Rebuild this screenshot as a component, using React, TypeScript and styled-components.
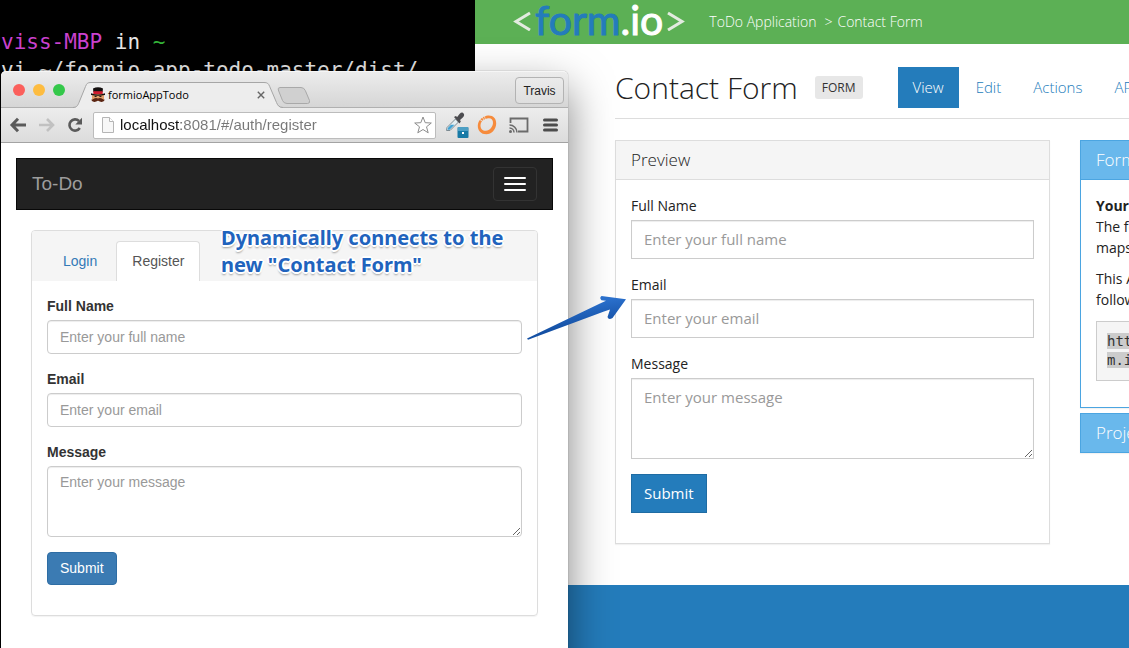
import React from "react";
import styled, { createGlobalStyle, css } from "styled-components";

const sans = `"Open Sans", "Noto Sans", sans-serif`;
const helvetica = `"Liberation Sans", Arial, sans-serif`;
const blue = "#247cbb";

const GlobalStyle = createGlobalStyle`
  *, *::before, *::after { box-sizing: border-box; }
  body { margin: 0; background: #fff; }
  button, input, textarea { font: inherit; margin: 0; }
  button { cursor: pointer; }
  a { text-decoration: none; }
`;

const Desktop = styled.div`
  position: relative;
  min-height: 100vh;
  overflow: hidden;
`;

/* ---------- Terminal ---------- */

const Terminal = styled.pre`
  position: absolute;
  left: 0;
  top: 0;
  bottom: 0;
  width: 475px;
  margin: 0;
  padding: 28px 0 0 1px;
  overflow: hidden;
  background: #000;
  color: #e6e6e6;
  font: 21px/28px "DejaVu Sans Mono", monospace;
`;

const Host = styled.span`
  color: #cb42cf;
`;

const Tilde = styled.span`
  color: #35b53a;
`;

/* ---------- Form.io portal ---------- */

const Portal = styled.div`
  position: absolute;
  left: 475px;
  right: -231px;
  top: 0;
  bottom: 0;
  display: flex;
  flex-direction: column;
  background: #fff;
  color: #222;
  font: 14px/21px ${sans};
`;

const PortalBar = styled.header`
  display: flex;
  align-items: center;
  gap: 24px;
  height: 44px;
  padding: 0 38px;
  background: #5cb055;
`;

const Logo = styled.a`
  display: flex;
  align-items: center;
  gap: 4px;
  height: 44px;
  padding-bottom: 4px;
  color: #fff;
  font: 400 41px/40px Lato, ${sans};
  -webkit-text-stroke: 1px currentColor;
`;

const LogoForm = styled.span`
  color: ${blue};
`;

const Crumbs = styled.nav`
  display: flex;
  gap: 8px;
  padding-bottom: 2px;
  color: #fff;
  font-weight: 350;

  a {
    color: #fff;
  }
`;

const Crumb = styled.span`
  display: flex;
  gap: 5px;
`;

const PortalBody = styled.main`
  padding: 22px 0 41px 140px;
`;

const TitleRow = styled.div`
  display: flex;
  align-items: center;
  height: 53px;
  padding-bottom: 9px;
  border-bottom: 1px solid #ddd;
`;

const Title = styled.h1`
  margin: 0;
  font: 300 30px/40px ${sans};
  white-space: nowrap;
`;

const Badge = styled.span`
  margin: 0 35px 0 17px;
  padding: 0 7px;
  border-radius: 3px;
  background: #e7e7e7;
  color: #333;
  font-size: 12px;
  line-height: 23px;
`;

const Pills = styled.nav`
  display: flex;
  gap: 2px;
`;

const Pill = styled.a<{ $active?: boolean }>`
  padding: 10px 15px;
  font-size: 15px;
  font-weight: 350;
  line-height: 21px;
  color: ${(p) => (p.$active ? "#fff" : blue)};
  background: ${(p) => (p.$active ? blue : "transparent")};
`;

const Columns = styled.div`
  display: grid;
  grid-template-columns: minmax(0, 1fr) 280px;
  gap: 30px;
  align-items: start;
  padding-top: 21px;
`;

const Panel = styled.section<{ $info?: boolean }>`
  border: 1px solid ${(p) => (p.$info ? "#4ba5e1" : "#ddd")};
  background: #fff;
  box-shadow: 0 1px 1px rgba(0, 0, 0, 0.05);
`;

const PanelHeading = styled.h2<{ $info?: boolean; $closed?: boolean }>`
  margin: 0;
  padding: 0 15px;
  border-bottom: ${(p) => (p.$closed ? "0" : "1px")} solid
    ${(p) => (p.$info ? "#4ba5e1" : "#ddd")};
  background: ${(p) => (p.$info ? "#69b8ec" : "#f5f5f5")};
  color: ${(p) => (p.$info ? "#fff" : "#222")};
  font: 300 17px/38px ${sans};
`;

const PanelBody = styled.div`
  padding: 15px;
`;

const Side = styled.aside`
  display: flex;
  flex-direction: column;
  gap: 5px;
`;

const Para = styled.p`
  margin: 0 0 10px;
`;

const CodeBox = styled.pre`
  margin: 11px 0;
  padding: 10px;
  border: 1px solid #ccc;
  background: #f5f5f5;
  color: #333;
  font: 14px/19px "DejaVu Sans Mono", monospace;

  code {
    font: inherit;
    background: #ccc;
  }
`;

const PortalFooter = styled.footer`
  flex: 1;
  background: ${blue};
`;

/* ---------- Forms, in the portal theme and the app theme ---------- */

type Theme = { $app?: boolean };

const Form = styled.form`
  display: flex;
  flex-direction: column;
  gap: 15px;
  align-items: stretch;
`;

const Group = styled.div`
  display: flex;
  flex-direction: column;
  gap: 4px;
`;

const Label = styled.label<Theme>`
  line-height: ${(p) => (p.$app ? "20px" : "21px")};
  font-weight: ${(p) => (p.$app ? 700 : 400)};
`;

const control = css<Theme>`
  display: block;
  width: 100%;
  border: 1px solid #ccc;
  border-radius: ${(p) => (p.$app ? "4px" : "0")};
  padding: ${(p) => (p.$app ? "5px 12px" : "8px 12px")};
  background: #fff;
  color: #555;
  font-size: ${(p) => (p.$app ? "14px" : "15px")};
  line-height: ${(p) => (p.$app ? "20px" : "21px")};
  box-shadow: inset 0 1px 1px rgba(0, 0, 0, 0.075);
  outline: none;

  &::placeholder {
    color: #999;
    opacity: 1;
  }
`;

const TextBox = styled.input<Theme>`
  ${control}
  height: ${(p) => (p.$app ? "34px" : "39px")};
  padding-bottom: ${(p) => (p.$app ? "5px" : "10px")};
`;

const MessageBox = styled.textarea<Theme>`
  ${control}
  height: ${(p) => (p.$app ? "71px" : "81px")};
  resize: vertical;
`;

const Submit = styled.button<Theme>`
  align-self: flex-start;
  height: ${(p) => (p.$app ? "33px" : "39px")};
  margin-bottom: 15px;
  padding: ${(p) => (p.$app ? "0 12px 2px" : "0 12px")};
  border: 1px solid ${(p) => (p.$app ? "#2e6da4" : "#1f6ca3")};
  border-radius: ${(p) => (p.$app ? "4px" : "0")};
  background: ${(p) => (p.$app ? "#3b7bb3" : blue)};
  color: #fff;
  font-size: ${(p) => (p.$app ? "14px" : "15px")};
  font-weight: ${(p) => (p.$app ? 400 : 500)};
`;

/* ---------- Browser window ---------- */

const Browser = styled.div`
  position: absolute;
  left: 1px;
  top: 71px;
  bottom: -30px;
  width: 567px;
  display: flex;
  flex-direction: column;
  border-radius: 5px 5px 0 0;
  background: #fff;
  color: #333;
  font: 14px/20px ${helvetica};
  box-shadow: 0 0 1px rgba(0, 0, 0, 0.6), 0 18px 44px rgba(0, 0, 0, 0.5);
`;

const TitleBar = styled.div`
  display: flex;
  align-items: flex-start;
  height: 37px;
  padding: 0 4px 0 12px;
  border-top: 1px solid #f6f6f6;
  border-radius: 5px 5px 0 0;
  background: linear-gradient(#ececec, #d5d5d5);
  box-shadow: inset 0 -1px 0 #b0b0b0;
`;

const Lights = styled.div`
  display: flex;
  gap: 8px;
  padding-top: 12px;
`;

const Light = styled.button<{ $color: string }>`
  width: 12px;
  height: 12px;
  padding: 0;
  border: 0;
  border-radius: 50%;
  background: ${(p) => p.$color};
`;

const Tab = styled.div`
  position: relative;
  display: flex;
  align-items: center;
  gap: 3px;
  width: 212px;
  height: 26px;
  margin: 10px 0 0 8px;
  padding: 0 19px 0 18px;
  color: #000;
  font: 500 11px/16px ${sans};
`;

const TabShape = styled.svg`
  position: absolute;
  left: 0;
  top: 0;
`;

const TabIcon = styled.svg`
  position: relative;
`;

const TabName = styled.span`
  position: relative;
  flex: 1;
`;

const TabClose = styled.button`
  position: relative;
  display: flex;
  width: 10px;
  padding: 1px;
  border: 0;
  background: none;
`;

const NewTab = styled.button`
  margin: 15px 0 0 -8px;
  padding: 0;
  border: 0;
  background: none;
  line-height: 0;
`;

const User = styled.button`
  margin: 5px 0 0 auto;
  width: 49px;
  height: 27px;
  padding: 0;
  border: 1px solid #b3b3b3;
  border-radius: 4px;
  background: linear-gradient(#ebebeb, #dedede);
  color: #222;
  font-size: 12px;
`;

const Toolbar = styled.div`
  display: flex;
  align-items: center;
  height: 35px;
  padding: 0 8px;
  border-bottom: 1px solid #a3a3a3;
  background: linear-gradient(#ededed, #dcdcdc);
`;

const ToolButtons = styled.div<{ $gap: number }>`
  display: flex;
  align-items: center;
  gap: ${(p) => p.$gap}px;
`;

const ToolButton = styled.button`
  display: flex;
  padding: 0;
  border: 0;
  background: none;
`;

const Address = styled.div`
  display: flex;
  align-items: center;
  gap: 6px;
  flex: 1;
  height: 27px;
  margin: 0 9px 0 10px;
  padding: 0 3px 0 8px;
  border: 1px solid #bcbcbc;
  border-radius: 2px;
  background: #fff;
`;

const Url = styled.input`
  flex: 1;
  min-width: 0;
  padding: 0;
  border: 0;
  outline: none;
  background: linear-gradient(90deg, #111 61px, #777 61px);
  background-clip: text;
  -webkit-background-clip: text;
  color: transparent;
  font: 15px/20px ${helvetica};
`;

const AppPage = styled.div`
  flex: 1;
  padding: 15px;
`;

const AppBar = styled.nav`
  display: flex;
  align-items: center;
  justify-content: space-between;
  height: 52px;
  padding: 0 15px;
  border: 1px solid #080808;
  background: #222;
`;

const Brand = styled.a`
  color: #9d9d9d;
  font-size: 19px;
`;

const Toggle = styled.button`
  display: flex;
  flex-direction: column;
  justify-content: center;
  gap: 4px;
  width: 44px;
  height: 34px;
  padding: 0 10px;
  border: 1px solid #333;
  border-radius: 4px;
  background: transparent;
`;

const Bar = styled.span`
  height: 2px;
  border-radius: 1px;
  background: #fff;
`;

const AppPanel = styled.section`
  margin: 20px 15px 0;
  border: 1px solid #ddd;
  border-radius: 4px;
  box-shadow: 0 1px 1px rgba(0, 0, 0, 0.05);
`;

const Tabs = styled.nav`
  display: flex;
  gap: 3px;
  padding: 10px 15px 0;
  border-radius: 3px 3px 0 0;
  background: #f5f5f5;
`;

const AppTab = styled.a<{ $active?: boolean }>`
  padding: 9px 15px 10px;
  border: 1px solid ${(p) => (p.$active ? "#ddd" : "transparent")};
  border-bottom: 0;
  border-radius: 4px 4px 0 0;
  background: ${(p) => (p.$active ? "#fff" : "transparent")};
  color: ${(p) => (p.$active ? "#555" : "#337ab7")};
`;

/* ---------- Annotation ---------- */

const Note = styled.p`
  position: absolute;
  left: 221px;
  top: 224px;
  margin: 0;
  color: #2163bd;
  font: 700 20px/27px "Noto Sans", ${sans};
  white-space: nowrap;
  text-shadow: -2px 0 #fff, 2px 0 #fff, 0 -2px #fff, 0 2px #fff, -1px -1px #fff,
    1px -1px #fff, -1px 1px #fff, 1px 1px #fff, 0 3px 2px rgba(0, 0, 0, 0.35);
`;

const Arrow = styled.svg`
  position: absolute;
  left: 524px;
  top: 290px;
`;

function ContactFields({ app }: { app?: boolean }) {
  const id = app ? "app" : "preview";
  return (
    <Form onSubmit={(e) => e.preventDefault()}>
      <Group>
        <Label $app={app} htmlFor={`${id}-name`}>Full Name</Label>
        <TextBox $app={app} id={`${id}-name`} placeholder="Enter your full name" />
      </Group>
      <Group>
        <Label $app={app} htmlFor={`${id}-email`}>Email</Label>
        <TextBox $app={app} id={`${id}-email`} type="email" placeholder="Enter your email" />
      </Group>
      <Group>
        <Label $app={app} htmlFor={`${id}-message`}>Message</Label>
        <MessageBox $app={app} id={`${id}-message`} placeholder="Enter your message" />
      </Group>
      <Submit $app={app}>Submit</Submit>
    </Form>
  );
}

function Favicon() {
  return (
    <TabIcon width="14" height="16" viewBox="0 0 14 16">
      <rect x="1" y="7" width="12" height="7" rx="2" fill="#e0a06a" />
      <path d="M2 1.5Q7-.8 12 1.5L11.6 5H2.4z" fill="#14100f" />
      <path d="M2.3 4.2h9.4V7H2.3z" fill="#d01c2e" />
      <path d="M0 6.2Q7 8.6 14 6.2V8Q7 9.6 0 8z" fill="#14100f" />
      <path d="M3.6 9.3h2M8.4 9.3h2" stroke="#2a1a12" strokeWidth="1.2" />
      <path d="M0 12.5Q1 13 2.4 12 5 10 7 11.6 9 10 11.6 12 13 13 14 12.5 12.8 15.4 9.6 14.8 8 14.4 7 13.6 6 14.4 4.4 14.8 1.2 15.4 0 12.5z" fill="#5a2412" />
    </TabIcon>
  );
}

function BrowserWindow() {
  return (
    <Browser>
      <TitleBar>
        <Lights>
          <Light $color="#fb605c" aria-label="Close window" />
          <Light $color="#fdbc40" aria-label="Minimize window" />
          <Light $color="#34c84a" aria-label="Zoom window" />
        </Lights>
        <Tab>
          <TabShape width="212" height="27" viewBox="0 0 212 27">
            <path d="M0 26C4 25.500 4.500 24 6 20.500L12.500 4.500C13.700 1.500 14.500.5 18 .5H191C194.500.5 195.500 1.500 196.700 4.500L203.500 20.500C205 24 206 25.500 210 26V27H0z" fill="#ededed" />
            <path d="M0 25.500C4 25 4.500 24 6 20.500L12.500 4.500C13.700 1.500 14.500.5 18 .5H191C194.500.5 195.500 1.500 196.700 4.500L203.500 20.500C205 24 206 25 210 25.500" fill="none" stroke="#a6a6a6" />
          </TabShape>
          <Favicon />
          <TabName>formioAppTodo</TabName>
          <TabClose aria-label="Close tab">
            <svg width="8" height="8" viewBox="0 0 8 8">
              <path d="M.8.8l6.400 6.400M7.200.8L.8 7.200" stroke="#666" strokeWidth="1.400" />
            </svg>
          </TabClose>
        </Tab>
        <NewTab aria-label="New tab">
          <svg width="34" height="18" viewBox="0 0 34 18">
            <path d="M3 .5H24Q27 .5 28.300 3.500L32.500 13.500Q33.200 16.500 30.500 16.500H10Q6.800 16.500 5.500 13.500L1.300 3Q.5.8 3 .5z" fill="#d0d0d0" stroke="#a9a9a9" />
          </svg>
        </NewTab>
        <User>Travis</User>
      </TitleBar>
      <Toolbar>
        <ToolButtons $gap={12}>
          <ToolButton aria-label="Back">
            <svg width="18" height="16" viewBox="0 0 18 16">
              <path d="M9 1.800L3 8l6 6.200M3 8h14" fill="none" stroke="#5a5a5a" strokeWidth="3" />
            </svg>
          </ToolButton>
          <ToolButton aria-label="Forward" disabled>
            <svg width="16" height="16" viewBox="0 0 16 16">
              <path d="M8 2l6 6-6 6M14 8H0" fill="none" stroke="#c1c1c1" strokeWidth="2.600" />
            </svg>
          </ToolButton>
          <ToolButton aria-label="Reload">
            <svg width="16" height="16" viewBox="0 0 16 16">
              <path d="M12.800 11A5.600 5.600 0 1 1 12 4" fill="none" stroke="#5a5a5a" strokeWidth="2.600" />
              <path d="M15 .8V7.500H8.300z" fill="#5a5a5a" />
            </svg>
          </ToolButton>
        </ToolButtons>
        <Address>
          <svg width="12" height="16" viewBox="0 0 12 16">
            <path d="M.5.5H7.500L11.500 4.500V15.500H.5z" fill="#f7f7f7" stroke="#b5b5b5" />
            <path d="M7.500.5V4.500H11.500" fill="#fff" stroke="#b5b5b5" />
          </svg>
          <Url aria-label="Address" defaultValue="localhost:8081/#/auth/register" />
          <ToolButton aria-label="Bookmark this page">
            <svg width="18" height="18" viewBox="0 0 18 18">
              <path d="M9 1l2.200 5.700 6.100.3-4.800 3.800 1.700 6L9 13.500l-5.200 3.300 1.700-6L.7 7l6.100-.3z" fill="#fff" stroke="#8c8c8c" />
            </svg>
          </ToolButton>
        </Address>
        <ToolButtons $gap={8}>
          <ToolButton aria-label="Color picker">
            <svg width="24" height="26" viewBox="0 0 24 26">
              <path d="M1.500 18.500L2 15.500 10.500 7l3 3L5 18.500z" fill="#e4eef2" stroke="#7c8a92" />
              <path d="M2.500 17.700L3 15.800 6 12.800H9.500L4.600 17.700z" fill="#3fa2d4" />
              <path d="M9 5l1.800-1 1.400 1L14.500 2Q17-.5 18.600 1.400 20 3.400 17.800 5.400L15 8l.8 1.600L14.500 11.500z" fill="#4c4c50" />
              <rect x="12.500" y="15" width="11" height="11" rx="1" fill="#187aa6" />
              <rect x="13" y="15" width="10" height="4" fill="#4d9fc4" />
              <rect x="17" y="20" width="2" height="2" fill="#fff" />
            </svg>
          </ToolButton>
          <ToolButton aria-label="Ring extension">
            <svg width="20" height="20" viewBox="0 0 20 20">
              <path fillRule="evenodd" d="M11 .6C16 .2 19.300 3.500 19.200 8.500 19 14.500 14.500 19.300 9.300 19.300 4 19.300.6 15.500.8 10.500.9 8.500 1.600 6.500 2.800 5L5 6.200C4 7.500 3.500 9 3.500 10.700 3.500 14 6 16 9 15.700 12.800 15.300 15.800 12 16 8 16.200 5 14.300 3 11.500 3.200 10.500 3.300 9.500 3.600 8.600 4.100L7.800 1.600C8.800 1 9.900.7 11 .6z" fill="#f68b3c" />
              <path d="M3.300 4.300L5.200 2.700 6.500 5 5.500 5.800zM5.800 2.300L7.200 1.600 8 4.300 7 4.800z" fill="#f68b3c" />
            </svg>
          </ToolButton>
          <ToolButton aria-label="Cast">
            <svg width="27" height="16" viewBox="-4 0 27 16">
              <path d="M1.500 6V1.500H18.500V14.500H9" fill="none" stroke="#6b6b6b" strokeWidth="1.800" />
              <path d="M.5 8A7.500 7.500 0 0 1 8 15.500M.5 11A4.500 4.500 0 0 1 5 15.500" fill="none" stroke="#6b6b6b" strokeWidth="1.500" />
              <circle cx="1.500" cy="14.500" r="1.500" fill="#6b6b6b" />
            </svg>
          </ToolButton>
          <ToolButton aria-label="Menu">
            <svg width="20" height="14" viewBox="0 0 20 14">
              <path d="M4.500 2h12M4.500 7h12M4.500 12h12" stroke="#4d4d4d" strokeWidth="3" strokeLinecap="round" />
            </svg>
          </ToolButton>
        </ToolButtons>
      </Toolbar>
      <AppPage>
        <AppBar>
          <Brand href="#">To-Do</Brand>
          <Toggle aria-label="Toggle navigation">
            <Bar />
            <Bar />
            <Bar />
          </Toggle>
        </AppBar>
        <AppPanel>
          <Tabs>
            <AppTab href="#login">Login</AppTab>
            <AppTab href="#register" $active>Register</AppTab>
          </Tabs>
          <PanelBody>
            <ContactFields app />
          </PanelBody>
        </AppPanel>
      </AppPage>
    </Browser>
  );
}

function FormioPortal() {
  return (
    <Portal>
      <PortalBar>
        <Logo href="#" aria-label="form.io">
          <svg width="18" height="22" viewBox="0 0 18 22">
            <path d="M17 4L3 12.500 17 21" fill="none" stroke="#e3ebe0" strokeWidth="3" />
          </svg>
          <span>
            <LogoForm>form</LogoForm>.io
          </span>
          <svg width="18" height="22" viewBox="0 0 18 22">
            <path d="M1 4l14 8.500L1 21" fill="none" stroke="#e3ebe0" strokeWidth="3" />
          </svg>
        </Logo>
        <Crumbs>
          <a href="#app">ToDo Application</a>
          <Crumb>
            <span>&gt;</span>
            <a href="#form">Contact Form</a>
          </Crumb>
        </Crumbs>
      </PortalBar>
      <PortalBody>
        <TitleRow>
          <Title>Contact Form</Title>
          <Badge>FORM</Badge>
          <Pills>
            <Pill href="#view" $active>View</Pill>
            <Pill href="#edit">Edit</Pill>
            <Pill href="#actions">Actions</Pill>
            <Pill href="#api">API</Pill>
          </Pills>
        </TitleRow>
        <Columns>
          <Panel>
            <PanelHeading>Preview</PanelHeading>
            <PanelBody>
              <ContactFields />
            </PanelBody>
          </Panel>
          <Side>
            <Panel $info>
              <PanelHeading $info>Form API</PanelHeading>
              <PanelBody>
                <Para>
                  <strong>Your API</strong>
                  <br />
                  The form
                  <br />
                  maps
                </Para>
                <Para>
                  This API
                  <br />
                  following
                </Para>
                <CodeBox>
                  <code>{"https\nm.io"}</code>
                </CodeBox>
              </PanelBody>
            </Panel>
            <Panel $info>
              <PanelHeading $info $closed>Project</PanelHeading>
            </Panel>
          </Side>
        </Columns>
      </PortalBody>
      <PortalFooter />
    </Portal>
  );
}

export default function App() {
  return (
    <>
      <GlobalStyle />
      <Desktop>
        <Terminal>
          <Host>viss-MBP</Host> in <Tilde>~</Tilde>
          {"\nvi ~/formio-app-todo-master/dist/"}
        </Terminal>
        <FormioPortal />
        <BrowserWindow />
        <Note>
          Dynamically connects to the
          <br />
          new "Contact Form"
        </Note>
        <Arrow width="106" height="54" viewBox="0 0 106 54">
          <defs>
            <linearGradient id="shaft" x1="0" y1="0" x2="0.3" y2="1">
              <stop offset="0.3" stopColor="#2a6fcb" />
              <stop offset="0.8" stopColor="#1450a4" />
            </linearGradient>
          </defs>
          <path d="M3 48.500L76 13.500 82 10.800 77.500 10.200Q75 8 77.500 6L102 9.300 88.500 28Q84.500 30.500 83.500 27L86 19.500 80 21.500 4 49.800z" fill="url(#shaft)" />
        </Arrow>
      </Desktop>
    </>
  );
}
